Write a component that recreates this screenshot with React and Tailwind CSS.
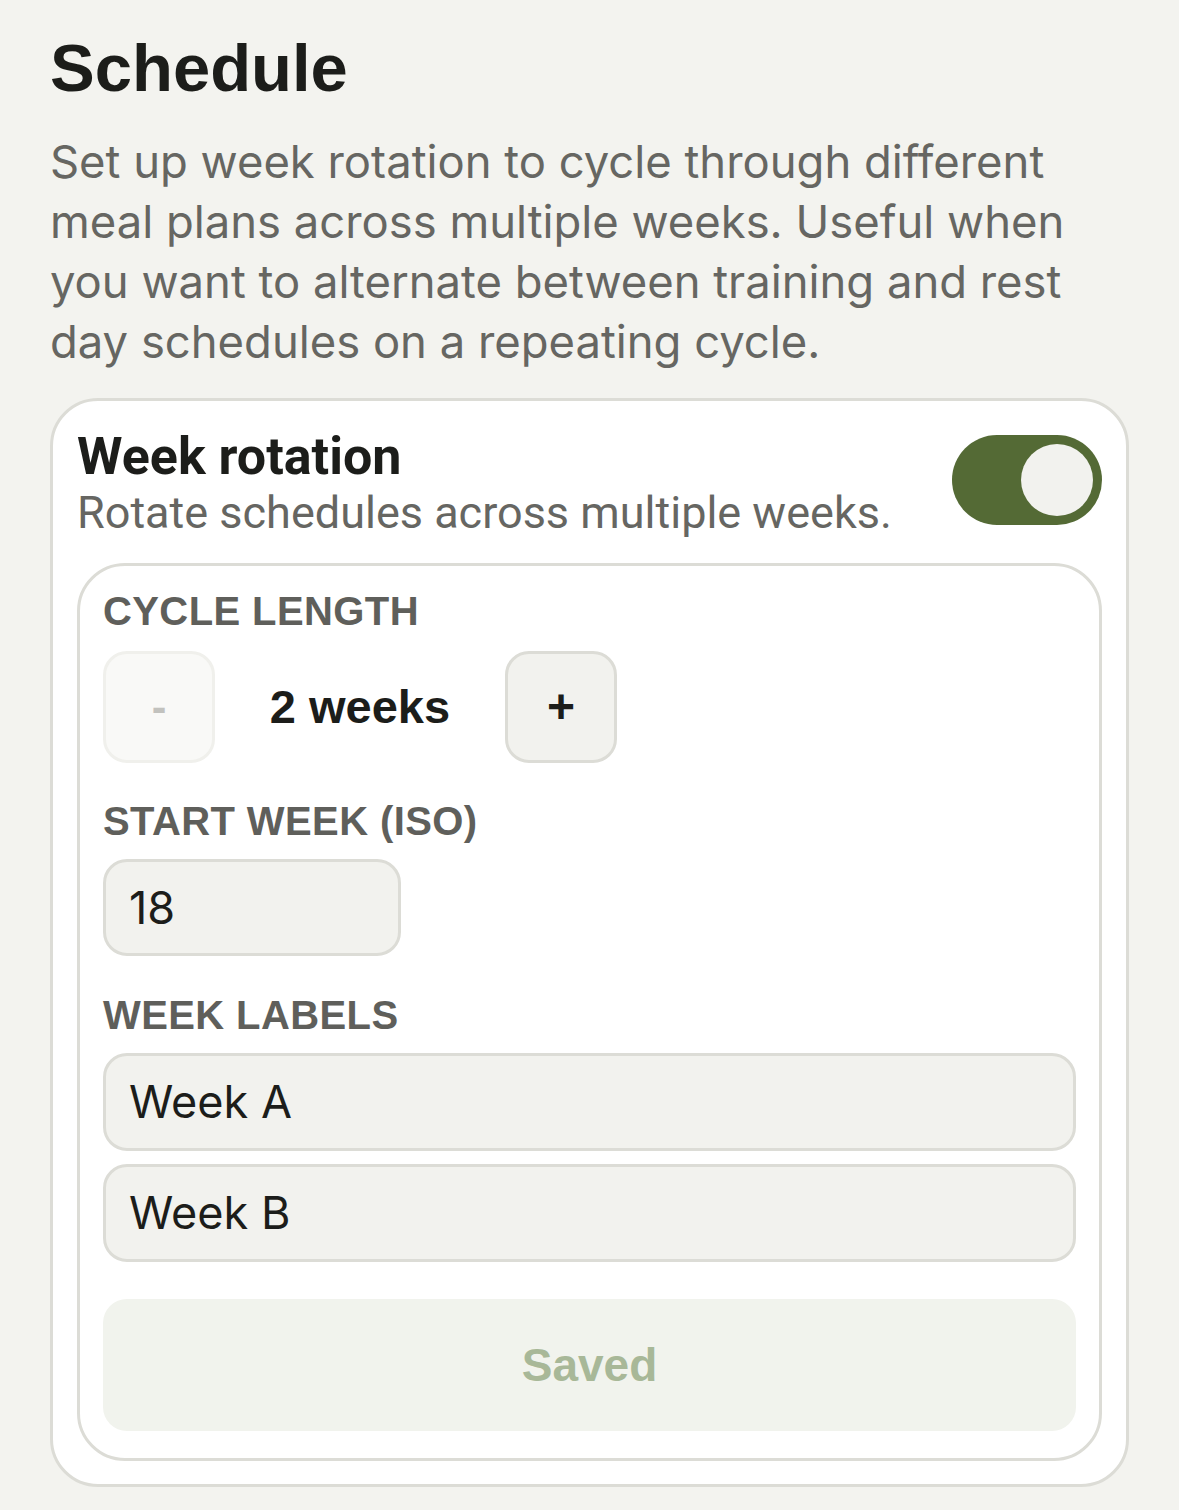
import React, { useState } from 'react';

function Label({ children }) {
    return (
        <div className="font-['Liberation_Sans',sans-serif] font-bold text-[40px] leading-[48px] tracking-[0.4px] text-[#5f5f5b]">
            {children}
        </div>
    );
}

function TextBox({ value, className }) {
    return (
        <div className={`flex items-center rounded-[24px] border-[3px] border-[#dcdcd6] bg-[#f2f2ee] px-[23px] font-['Inter',sans-serif] text-[45px] text-[#1c1d1a] ${className}`}>
            {value}
        </div>
    );
}

export default function App() {
    const [on, setOn] = useState(true);
    const [weeks] = useState(2);

    return (
        <div className="min-h-[1510px] w-[1179px] bg-[#f3f3ef] px-[50px] pt-[34px]">
            <h1 className="font-['Liberation_Sans',sans-serif] font-bold text-[67px] leading-none text-[#1c1d1a]">Schedule</h1>
            <p className="mt-[31px] w-[1050px] font-['Inter',sans-serif] text-[45.4px] leading-[60px] text-[#666662]">
                Set up week rotation to cycle through different meal plans across multiple weeks. Useful when you want to alternate between training and rest day schedules on a repeating cycle.
            </p>

            <div className="mt-[26px] rounded-[48px] border-[3px] border-[#dcdcd6] bg-white px-[24px] pt-[28px] pb-[23px]">
                <div className="flex items-start justify-between">
                    <div className="font-['Roboto',sans-serif]">
                        <div className="font-bold text-[52px] leading-[56px] text-[#1c1d1a]">Week rotation</div>
                        <div className="text-[45px] leading-[56px] text-[#666662]">Rotate schedules across multiple weeks.</div>
                    </div>
                    <button
                        onClick={() => setOn(!on)}
                        className="mt-[6px] flex h-[90px] w-[150px] items-center rounded-full bg-[#546a35] px-[9px] justify-end"
                    >
                        <span className="h-[72px] w-[72px] rounded-full bg-[#f2f2ee]" />
                    </button>
                </div>

                <div className="mt-[22px] rounded-[48px] border-[3px] border-[#dcdcd6] bg-white px-[23px] pt-[21px] pb-[27px]">
                    <Label>CYCLE LENGTH</Label>
                    <div className="mt-[16px] flex items-center">
                        <button className="flex h-[112px] w-[112px] items-center justify-center rounded-[24px] border-[3px] border-[#f0f0ec] bg-[#f9f9f7] font-['Liberation_Sans',sans-serif] font-bold text-[44px] text-[#c2c2be]">
                            -
                        </button>
                        <div className="w-[290px] text-center font-['Liberation_Sans',sans-serif] font-bold text-[47px] text-[#1c1d1a]">
                            {weeks} weeks
                        </div>
                        <button className="flex h-[112px] w-[112px] items-center justify-center rounded-[24px] border-[3px] border-[#dcdcd6] bg-[#f2f2ee] font-['Liberation_Sans',sans-serif] font-bold text-[48px] text-[#1c1d1a]">
                            +
                        </button>
                    </div>

                    <div className="mt-[34px]">
                        <Label>START WEEK (ISO)</Label>
                    </div>
                    <TextBox value="18" className="mt-[14px] h-[97px] w-[298px]" />

                    <div className="mt-[35px]">
                        <Label>WEEK LABELS</Label>
                    </div>
                    <div className="mt-[14px] flex flex-col gap-[13px]">
                        <TextBox value="Week A" className="h-[98px] w-full" />
                        <TextBox value="Week B" className="h-[98px] w-full" />
                    </div>

                    <button className="mt-[37px] h-[132px] w-full rounded-[24px] bg-[#f1f3ed] font-['Liberation_Sans',sans-serif] font-bold text-[46px] text-[#a8b898]">
                        Saved
                    </button>
                </div>
            </div>
        </div>
    );
}
